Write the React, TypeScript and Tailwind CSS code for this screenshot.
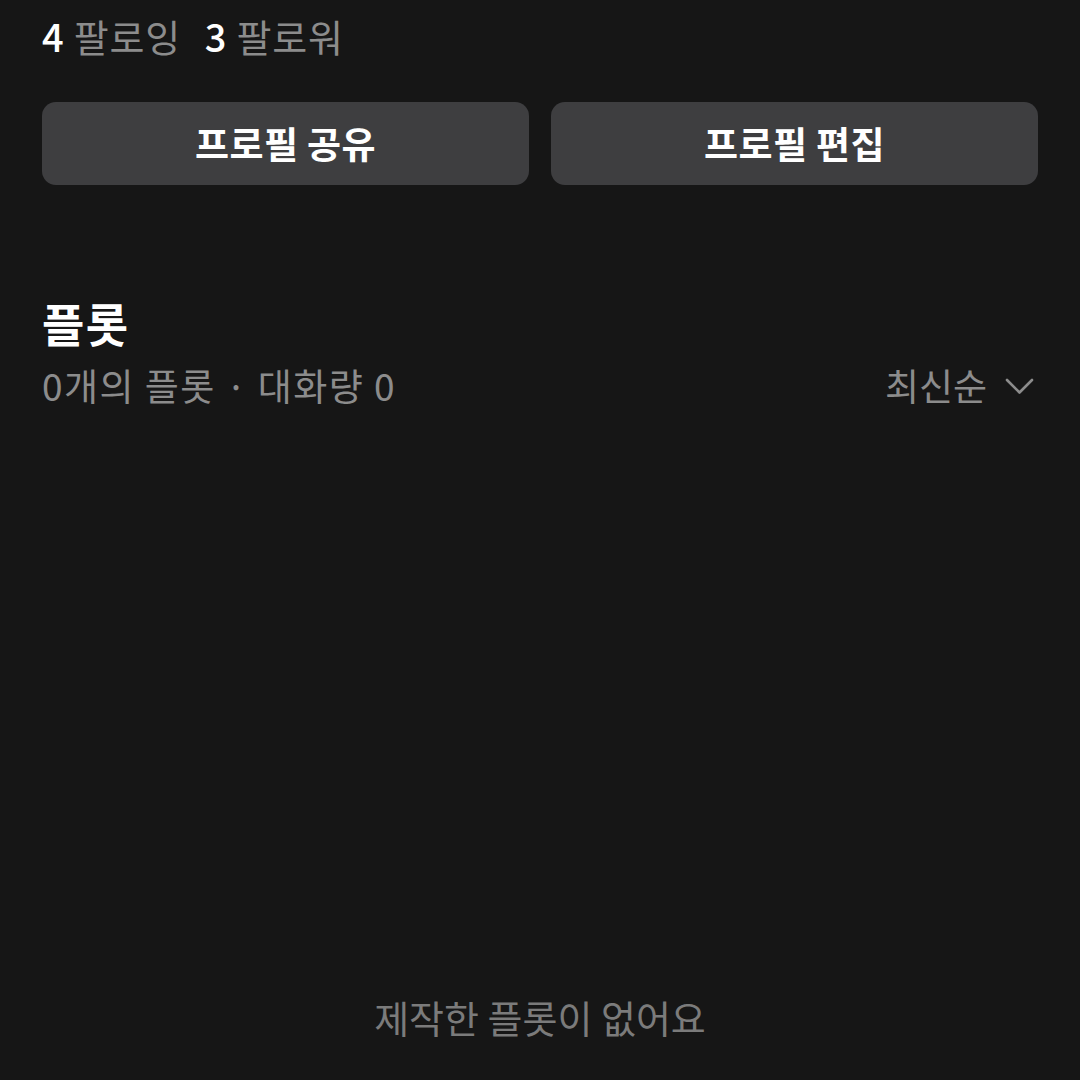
export default function App() {
  return (
    <div className="w-[1080px] h-[1080px] overflow-hidden bg-[#161616] px-[42px] flex flex-col [font-family:'Noto_Sans_CJK_KR','Noto_Sans',sans-serif]">
      <Stats />
      <Buttons />
      <PlotHeader />
      <div className="flex-1 flex items-end justify-center pb-[44px]">
        <p className="text-[38px] leading-none text-[#7b7b7b]">제작한 플롯이 없어요</p>
      </div>
    </div>
  );
}

function Stats() {
  return (
    <div className="flex items-center gap-[24px] h-[72px] text-[38px] leading-none tracking-[0.02em]">
      <span>
        <span className="text-white font-medium">4</span>
        <span className="text-[#8c8c8c]"> 팔로잉</span>
      </span>
      <span>
        <span className="text-white font-medium">3</span>
        <span className="text-[#8c8c8c]"> 팔로워</span>
      </span>
    </div>
  );
}

function Buttons() {
  return (
    <div className="mt-[30px] grid grid-cols-2 gap-[22px]">
      <button className="h-[83px] rounded-[14px] bg-[#3e3e40] text-white text-[37px] font-semibold leading-none tracking-[0.01em]">
        프로필 공유
      </button>
      <button className="h-[83px] rounded-[14px] bg-[#3e3e40] text-white text-[37px] font-semibold leading-none tracking-[0.01em]">
        프로필 편집
      </button>
    </div>
  );
}

function PlotHeader() {
  return (
    <div className="mt-[114px] flex flex-col">
      <h2 className="text-[46px] font-bold leading-none text-white tracking-[0.03em]">플롯</h2>
      <div className="mt-[22px] flex items-center justify-between text-[37px] leading-none text-[#8c8c8c]">
        <span className="tracking-[0.04em]">0개의 플롯 · 대화량 0</span>
        <button className="flex items-center gap-[18px] pr-[4px] text-[#8c8c8c]">
          최신순
          <svg width="29" height="18" viewBox="0 0 29 18" fill="none" stroke="#8c8c8c" strokeWidth="2.6" strokeLinecap="round" strokeLinejoin="round">
            <path d="M2 3l12.5 12.5L27 3" />
          </svg>
        </button>
      </div>
    </div>
  );
}
